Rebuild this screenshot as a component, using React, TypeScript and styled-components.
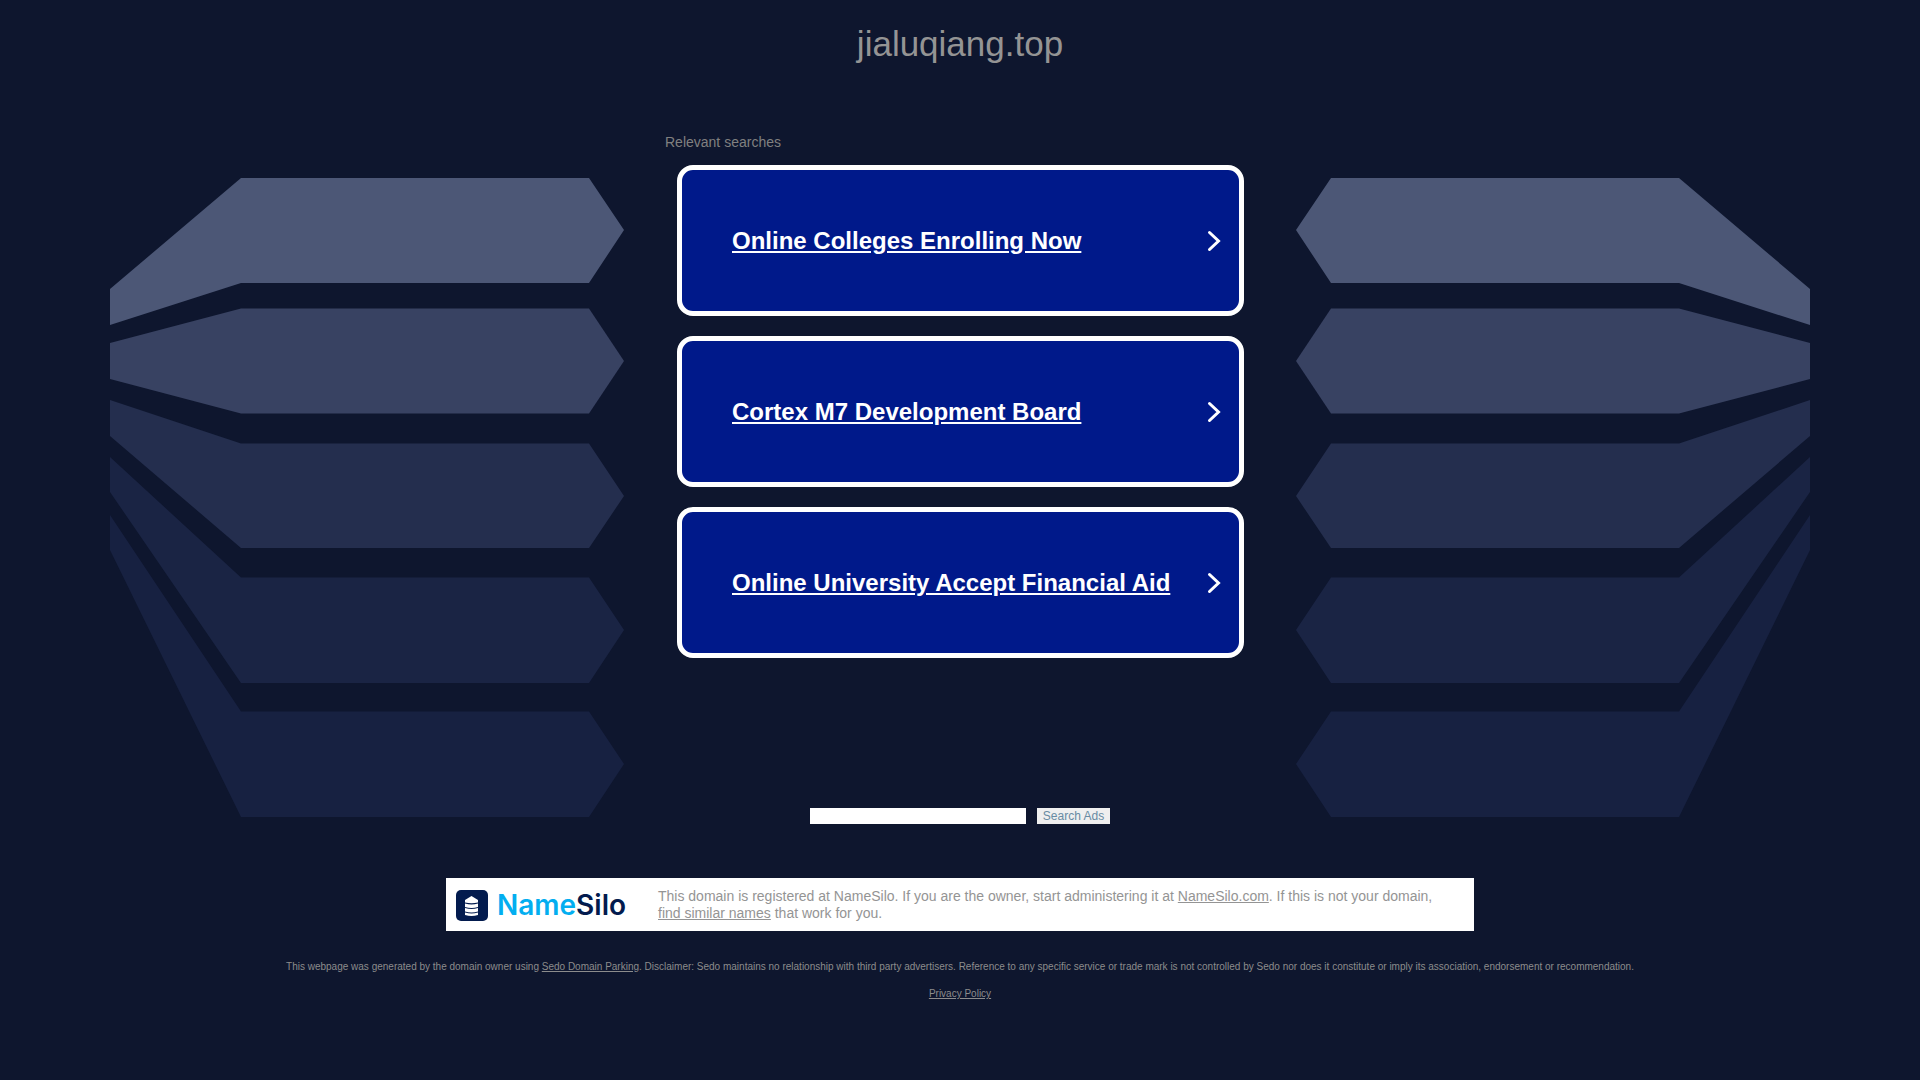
import React from "react";
import styled, { createGlobalStyle } from "styled-components";

const GlobalStyle = createGlobalStyle`
  * { box-sizing: border-box; }
  body {
    margin: 0;
    background: #0e162e;
    color: #949494;
    font-family: "Liberation Sans", Arial, sans-serif;
  }
  a { color: inherit; }
`;

const Page = styled.div`
  display: flex;
  flex-direction: column;
  align-items: center;
`;

const Title = styled.h1`
  margin: 24px 0 0;
  font-size: 35px;
  font-weight: 400;
  line-height: 40px;
`;

const Stage = styled.main`
  display: grid;
  grid-template-columns: 514px 590px 514px;
  justify-content: center;
  column-gap: 41px;
  width: 100%;
  padding-top: 70px;
`;

const Art = styled.svg<{ $mirrored?: boolean }>`
  width: 100%;
  margin-top: 44px;
  transform: ${(p) => (p.$mirrored ? "scaleX(-1)" : "none")};
`;

const Results = styled.section`
  display: flex;
  flex-direction: column;
`;

const Label = styled.h2`
  margin: 0;
  color: #808080;
  font-size: 14px;
  font-weight: 400;
  line-height: 16px;
`;

const CardList = styled.ul`
  display: flex;
  flex-direction: column;
  gap: 20px;
  margin: 0;
  padding: 15px 11px 0 12px;
  list-style: none;
`;

const Card = styled.a`
  display: flex;
  align-items: center;
  justify-content: space-between;
  height: 151px;
  padding: 0 18px 0 50px;
  border: 5px solid #fff;
  border-radius: 16px;
  background: #00198a;
  color: #fff;
  font-size: 24px;
  font-weight: 700;
  line-height: 28px;
`;

const Chevron = styled.svg`
  width: 14px;
  height: 22px;
  flex: none;
`;

const SearchForm = styled.form`
  display: flex;
  gap: 11px;
  margin-top: -10px;
`;

const SearchInput = styled.input`
  width: 216px;
  height: 16px;
  padding: 0 2px;
  border: 0;
  background: #fff;
  font-size: 12px;
`;

const SearchButton = styled.button`
  height: 16px;
  padding: 0 6px;
  border: 0;
  background: #efefef;
  color: #688ba3;
  font-family: inherit;
  font-size: 12px;
  line-height: 16px;
`;

const Banner = styled.aside`
  display: flex;
  align-items: center;
  width: 1028px;
  max-width: 100%;
  margin-top: 54px;
  padding: 10px 20px 9px 10px;
  background: #fff;
`;

const Logo = styled.a`
  display: flex;
  align-items: center;
  gap: 9px;
  flex: none;
  width: 202px;
  color: #031b4e;
  font-family: Inter, sans-serif;
  font-size: 28px;
  font-weight: 600;
  line-height: 32px;
  text-decoration: none;
`;

const LogoMark = styled.svg`
  width: 32px;
  height: 31px;
`;

const LogoAccent = styled.span`
  color: #03aef0;
`;

const BannerText = styled.p`
  margin: 0;
  font-size: 14px;
  line-height: 17px;
`;

const Footer = styled.footer`
  display: flex;
  flex-direction: column;
  align-items: center;
  gap: 15px;
  padding: 30px 16px;
  color: #8c8c8c;
  font-size: 10px;
  line-height: 12px;
  text-align: center;
`;

const FooterLine = styled.p`
  margin: 0;
`;

const bands = [
  { fill: "#4c5776", points: "0,111 131,0 479,0 514,52 479,105 131,105 0,147" },
  { fill: "#384262", points: "0,165 131,130.5 479,130.5 514,183 479,235.5 131,235.5 0,201" },
  { fill: "#242e4e", points: "0,222 131,265.5 479,265.5 514,318 479,370 131,370 0,258" },
  { fill: "#1a2444", points: "0,279 131,399.5 479,399.5 514,452 479,505 131,505 0,314" },
  { fill: "#172141", points: "0,337 131,533.5 479,533.5 514,586 479,639 131,639 0,372" },
];

const searches = [
  "Online Colleges Enrolling Now",
  "Cortex M7 Development Board",
  "Online University Accept Financial Aid",
];

function Bands({ mirrored }: { mirrored?: boolean }) {
  return (
    <Art $mirrored={mirrored} viewBox="0 0 514 640" aria-hidden="true">
      {bands.map((band) => (
        <polygon key={band.fill} points={band.points} fill={band.fill} />
      ))}
    </Art>
  );
}

export default function App() {
  return (
    <>
      <GlobalStyle />
      <Page>
        <Title>jialuqiang.top</Title>
        <Stage>
          <Bands />
          <Results>
            <Label>Relevant searches</Label>
            <CardList>
              {searches.map((text) => (
                <li key={text}>
                  <Card href="#">
                    {text}
                    <Chevron viewBox="0 0 14 22" aria-hidden="true">
                      <path
                        d="M2.500 2.500 11.500 11 2.500 19.500"
                        fill="none"
                        stroke="#fff"
                        strokeWidth="3"
                        strokeLinecap="round"
                      />
                    </Chevron>
                  </Card>
                </li>
              ))}
            </CardList>
          </Results>
          <Bands mirrored />
        </Stage>
        <SearchForm onSubmit={(e) => e.preventDefault()}>
          <SearchInput type="text" aria-label="Search Ads" />
          <SearchButton type="submit">Search Ads</SearchButton>
        </SearchForm>
        <Banner>
          <Logo href="#">
            <LogoMark viewBox="0 0 32 31" aria-hidden="true">
              <rect width="32" height="31" rx="5" fill="#031b4e" />
              <path d="M15.500 6 22 10v2.500q-6.500 1.500-13 0V10Z" fill="#fff" />
              <path d="M9 13.500q6.500 2 13 0v3.500q-6.500 2-13 0Z" fill="#fff" />
              <path d="M9 18q6.500 2 13 0v3.500q-6.500 2-13 0Z" fill="#fff" />
              <path d="M9 22.500q6.500 2 13 0v2.500q-6.500 2-13 0Z" fill="#fff" />
            </LogoMark>
            <span>
              <LogoAccent>Name</LogoAccent>Silo
            </span>
          </Logo>
          <BannerText>
            This domain is registered at NameSilo. If you are the owner, start administering it at{" "}
            <a href="#">NameSilo.com</a>. If this is not your domain, <a href="#">find similar names</a>{" "}
            that work for you.
          </BannerText>
        </Banner>
        <Footer>
          <FooterLine>
            This webpage was generated by the domain owner using <a href="#">Sedo Domain Parking</a>.
            Disclaimer: Sedo maintains no relationship with third party advertisers. Reference to any
            specific service or trade mark is not controlled by Sedo nor does it constitute or imply its
            association, endorsement or recommendation.
          </FooterLine>
          <a href="#">Privacy Policy</a>
        </Footer>
      </Page>
    </>
  );
}
